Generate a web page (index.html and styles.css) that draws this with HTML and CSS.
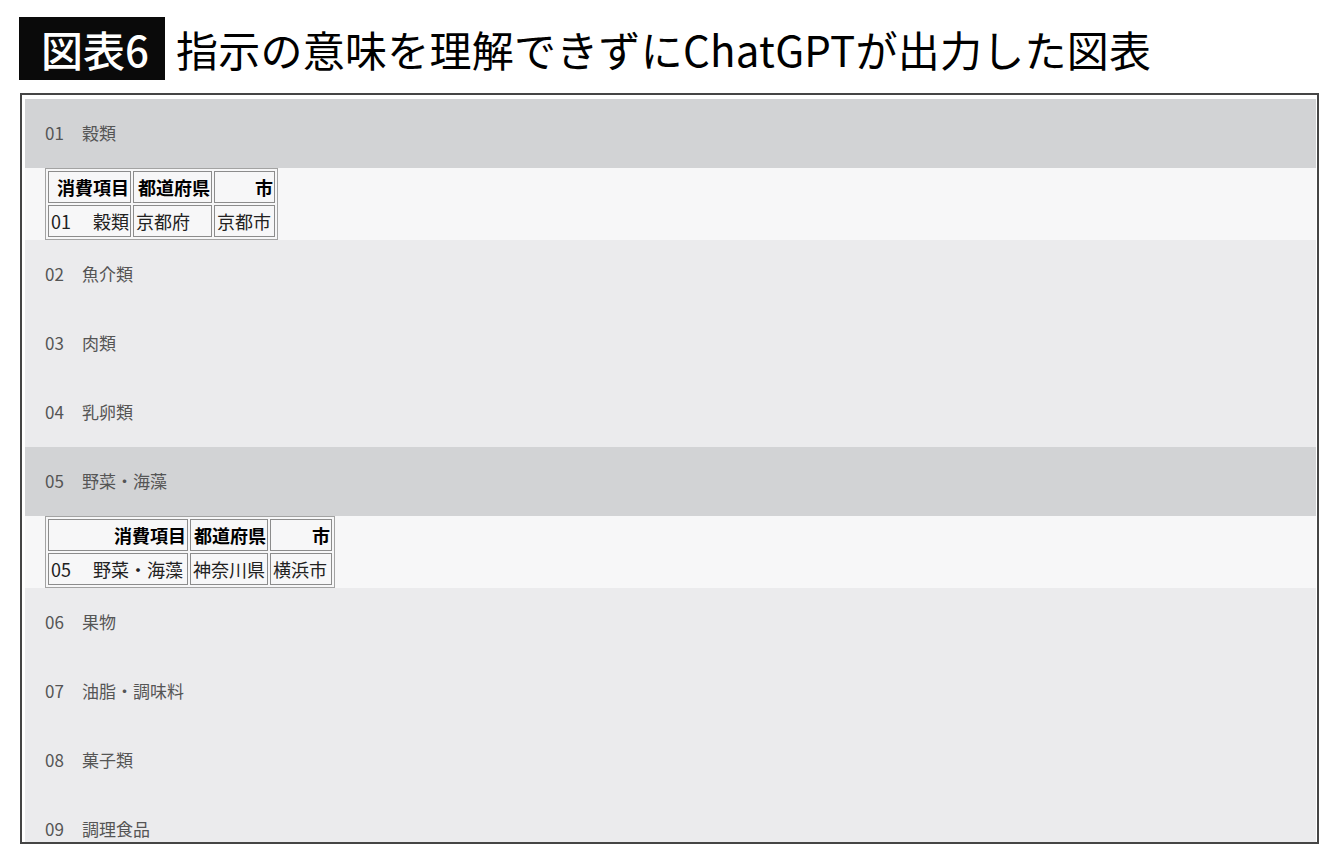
FILE: index.html
```html
<!DOCTYPE html>
<html lang="ja">
<head>
<meta charset="utf-8">
<title>図表6</title>
<link rel="stylesheet" href="styles.css">
</head>
<body>
<div class="header">
  <div class="badge">図表6</div>
  <h1 class="title">指示の意味を理解できずにChatGPTが出力した図表</h1>
</div>
<div class="frame">
  <div class="row dark"><span class="num">01</span>穀類</div>
  <div class="tablearea">
    <table class="t">
      <tr><th class="c1a">消費項目</th><th class="c2a">都道府県</th><th class="c3a">市</th></tr>
      <tr><td><span class="code">01</span>穀類</td><td>京都府</td><td>京都市</td></tr>
    </table>
  </div>
  <div class="row"><span class="num">02</span>魚介類</div>
  <div class="row"><span class="num">03</span>肉類</div>
  <div class="row"><span class="num">04</span>乳卵類</div>
  <div class="row dark"><span class="num">05</span>野菜・海藻</div>
  <div class="tablearea">
    <table class="t">
      <tr><th class="c1b">消費項目</th><th class="c2b">都道府県</th><th class="c3b">市</th></tr>
      <tr><td><span class="code">05</span>野菜・海藻</td><td>神奈川県</td><td>横浜市</td></tr>
    </table>
  </div>
  <div class="row"><span class="num">06</span>果物</div>
  <div class="row"><span class="num">07</span>油脂・調味料</div>
  <div class="row"><span class="num">08</span>菓子類</div>
  <div class="row"><span class="num">09</span>調理食品</div>
</div>
</body>
</html>
```

FILE: styles.css
```css
* { box-sizing: border-box; }
html, body { margin: 0; padding: 0; background: #fff; }
body {
  font-family: "Noto Sans CJK JP", "Noto Sans", sans-serif;
  color: #000;
  width: 1340px;
  height: 860px;
  overflow: hidden;
}
.header {
  display: flex;
  align-items: center;
  padding: 17px 0 0 19px;
  height: 80px;
}
.badge {
  background: #0a0a0a;
  color: #fff;
  width: 146px;
  height: 63px;
  line-height: 63px;
  font-size: 42px;
  font-weight: 500;
  padding-left: 22px;
}
.title {
  margin: 0 0 0 11px;
  font-size: 42px;
  font-weight: 400;
  line-height: 63px;
  letter-spacing: 0.25px;
}
.frame {
  margin: 13px 0 0 20px;
  width: 1299px;
  height: 751px;
  border: 2px solid #454545;
  padding: 4px 1px 1px 3px;
  overflow: hidden;
  background: #fff;
}
.row {
  height: 69px;
  display: flex;
  align-items: center;
  padding-left: 20px;
  padding-bottom: 3px;
  background: #ebebed;
  color: #555;
  font-size: 17px;
}
.row.dark { background: #d2d3d5; }
.num { width: 37px; flex: none; }
.tablearea {
  background: #f7f7f8;
  height: 72px;
  padding-left: 20px;
}
.t {
  border: 1px solid #a3a3a3;
  border-spacing: 2px;
  font-size: 18px;
  line-height: 30px;
}
.t th, .t td {
  border: 1px solid #8c8c8c;
  height: 32px;
  padding: 0 1px 0 2px;
  white-space: nowrap;
}
.t th { text-align: right; font-weight: 700; color: #000; }
.t td { text-align: left; font-weight: 400; color: #222; }
.code { display: inline-block; width: 42px; }
.c1a { width: 83px; }
.c2a { width: 79px; }
.c3a { width: 61px; }
.c1b { width: 140px; }
.c2b { width: 78px; }
.c3b { width: 62px; }
```
